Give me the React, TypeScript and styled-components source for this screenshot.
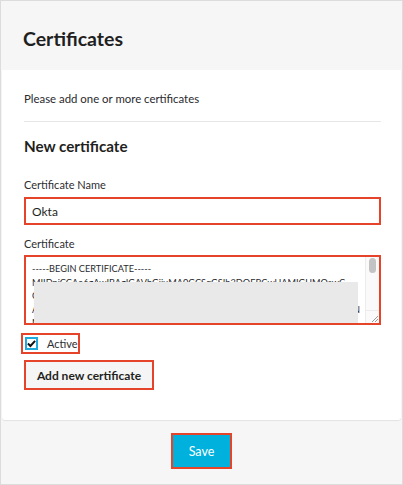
import React from "react";
import styled, { createGlobalStyle } from "styled-components";

const Global = createGlobalStyle`
  html, body { margin: 0; padding: 0; background: #fff; }
  body { font-family: Lato, "Open Sans", Arial, sans-serif; color: #1d1d21; }
  * { box-sizing: border-box; }
`;

const RED = "#e5442b";

const Frame = styled.div`
  width: 403px;
  height: 485px;
  border: 1px solid #dcdcdc;
  background: #f6f6f6;
  display: flex;
  flex-direction: column;
`;

const Header = styled.div`
  height: 69px;
  padding: 27px 0 0 22px;
`;

const Title = styled.h1`
  margin: 0;
  font-size: 19.5px;
  font-weight: 700;
  line-height: 22px;
  color: #1f1f22;
`;

const Panel = styled.div`
  margin: 0 1px;
  background: #fff;
  height: 350px;
  padding: 22px 20px 0 22px;
  border-radius: 0 0 3px 3px;
  box-shadow: 0 1px 1px rgba(0, 0, 0, 0.08);
  display: flex;
  flex-direction: column;
`;

const Intro = styled.p`
  margin: 0;
  font-size: 11.4px;
  line-height: 14px;
  color: #2a2a2e;
`;

const Divider = styled.hr`
  margin: 15px 0 0;
  border: 0;
  border-top: 1px solid #e6e6e6;
`;

const Section = styled.h2`
  margin: 15px 0 0;
  font-size: 15.2px;
  font-weight: 700;
  line-height: 18px;
  color: #1f1f22;
`;

const Label = styled.div<{ $top: number }>`
  margin-top: ${(p) => p.$top}px;
  font-size: 11px;
  line-height: 13px;
  color: #2e2e32;
`;

const Input = styled.div`
  margin-top: 6px;
  height: 28px;
  border: 2px solid ${RED};
  padding: 0 0 0 6px;
  display: flex;
  align-items: center;
  font-size: 12px;
  color: #1f1f22;
`;

const TextArea = styled.div`
  position: relative;
  margin-top: 5px;
  height: 70px;
  border: 2px solid ${RED};
  overflow: hidden;
  display: flex;
`;

const Lines = styled.div`
  flex: 1;
  padding: 5px 0 0 6px;
  font-size: 9.2px;
  line-height: 13.5px;
  color: #2a2a2e;
  white-space: nowrap;
  overflow: hidden;
`;

const Line = styled.div<{ $spread?: boolean }>`
  display: flex;
  justify-content: ${(p) => (p.$spread ? "space-between" : "flex-start")};
  width: ${(p) => (p.$spread ? "328px" : "auto")};
`;

const Mask = styled.div`
  position: absolute;
  left: 8px;
  top: 25px;
  width: 324px;
  height: 41px;
  background: #e9e9e9;
`;

const ScrollTrack = styled.div`
  width: 14px;
  border-left: 1px solid #ececec;
  background: #fafafa;
  display: flex;
  flex-direction: column;
  align-items: center;
  padding-top: 1px;
`;

const Thumb = styled.div`
  width: 7px;
  height: 15px;
  border-radius: 4px;
  background: #c3c3c3;
`;

const Grip = styled.div`
  margin-top: auto;
  width: 13px;
  height: 13px;
  border-top: 1px solid #ececec;
  display: flex;
  align-items: flex-end;
  justify-content: flex-end;
`;

const CheckRow = styled.label`
  margin: 8px 0 0 -3px;
  align-self: flex-start;
  width: 59px;
  height: 21px;
  border: 2px solid ${RED};
  display: flex;
  align-items: center;
  padding-left: 2px;
  gap: 9px;
  font-size: 11px;
  color: #2e2e32;
`;

const Box = styled.span`
  width: 13px;
  height: 13px;
  border: 2px solid #20a9dc;
  display: flex;
  align-items: center;
  justify-content: center;
  background: #fff;
`;

const AddButton = styled.button`
  margin-top: 6px;
  align-self: flex-start;
  width: 130px;
  height: 30px;
  background: #f5f5f5;
  border: 2px solid ${RED};
  font-family: inherit;
  font-size: 12px;
  font-weight: 700;
  color: #1f1f22;
  padding: 0;
`;

const Footer = styled.div`
  flex: 1;
  display: flex;
  justify-content: center;
  padding-top: 13px;
`;

const SaveButton = styled.button`
  width: 61px;
  height: 36px;
  background: #00b1dd;
  border: 2px solid ${RED};
  color: #fff;
  font-family: inherit;
  font-size: 12.5px;
  font-weight: 400;
  padding: 0;
`;

export default function App() {
  return (
    <>
      <Global />
      <Frame>
        <Header>
          <Title>Certificates</Title>
        </Header>
        <Panel>
          <Intro>Please add one or more certificates</Intro>
          <Divider />
          <Section>New certificate</Section>
          <Label $top={23}>Certificate Name</Label>
          <Input>Okta</Input>
          <Label $top={12}>Certificate</Label>
          <TextArea>
            <Lines>
              <Line>-----BEGIN CERTIFICATE-----</Line>
              <Line>MIIDpjCCAo6gAwIBAgIGAVbGjiuMA0GCSqGSIb3DQEBCwUAMIGUMQswC</Line>
              <Line>C</Line>
              <Line $spread>
                <span>A</span>
                <span>N</span>
              </Line>
              <Line>MRQwEgYDVQQDDAtkZXYtMjYx</Line>
            </Lines>
            <Mask />
            <ScrollTrack>
              <Thumb />
              <Grip>
                <svg width="9" height="9" viewBox="0 0 9 9">
                  <path d="M8 2 L2 8 M8 5 L5 8" stroke="#9a9a9a" strokeWidth="1" fill="none" />
                </svg>
              </Grip>
            </ScrollTrack>
          </TextArea>
          <CheckRow>
            <Box>
              <svg width="10" height="9" viewBox="0 0 10 9">
                <path d="M1 4.5 L3.8 7.3 L9 1.5" stroke="#111" strokeWidth="2.2" fill="none" />
              </svg>
            </Box>
            Active
          </CheckRow>
          <AddButton>Add new certificate</AddButton>
        </Panel>
        <Footer>
          <SaveButton>Save</SaveButton>
        </Footer>
      </Frame>
    </>
  );
}
